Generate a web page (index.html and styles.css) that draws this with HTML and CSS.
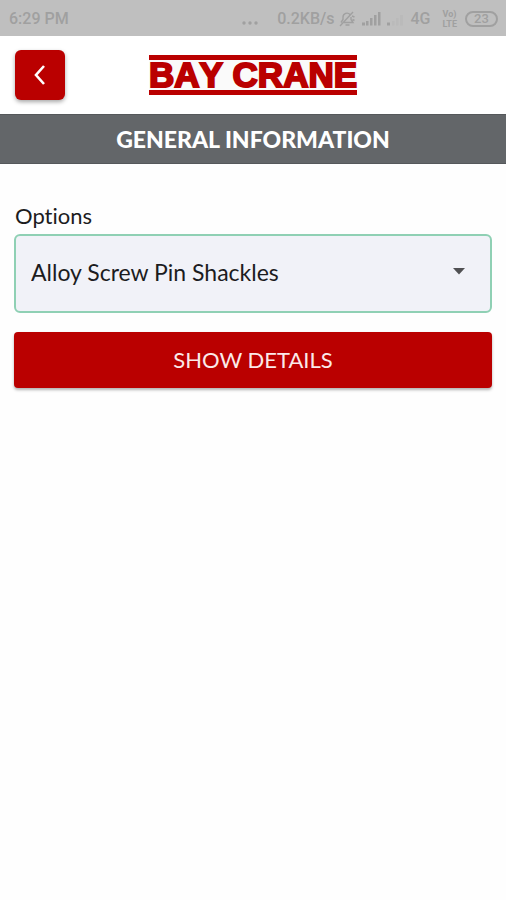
FILE: index.html
```html
<!DOCTYPE html>
<html lang="en">
<head>
<meta charset="utf-8">
<meta name="viewport" content="width=device-width, initial-scale=1">
<title>Bay Crane - General Information</title>
<link rel="stylesheet" href="styles.css">
</head>
<body>
<div class="status">
  <span class="time">6:29 PM</span>
  <span class="status-right">
    <svg class="dots" width="18" height="16" viewBox="0 0 18 16" fill="currentColor"><circle cx="3" cy="12" r="1.7"/><circle cx="9" cy="12" r="1.7"/><circle cx="15" cy="12" r="1.7"/></svg>
    <span>0.2KB/s</span>
    <svg width="18" height="16" viewBox="0 0 18 16" fill="none" stroke="currentColor" stroke-width="1.4"><path d="M3 11.500 5 8.500V6a4 4 0 0 1 7-2.500M13 6v2.500l2 3H6M7.500 14h4M2 15 15 1M14 5l2.500 1M14.500 8.500l2 1"/></svg>
    <svg class="signal" width="22" height="16" viewBox="0 0 22 16" fill="currentColor"><path d="M2 11.500h3v3H2zM6 10h2.500v4.500H6zM10 7h2.500v7.500H10zM14 4h2.500v10.500H14zM18 1h2.500v13.500H18z"/></svg>
    <svg class="signal" width="20" height="16" viewBox="0 0 20 16" fill="currentColor"><path d="M1 11.500h3v3H1z"/><path opacity=".15" d="M6 10h2.500v4.500H6zM10 7h2.500v7.500H10zM14 4h3v10.500h-3z"/></svg>
    <span>4G</span>
    <span class="volte"><span>Vo)</span><span>LTE</span></span>
    <span class="battery">23</span>
  </span>
</div>
<header class="header">
  <button class="back" type="button" aria-label="Back">
    <svg width="20" height="24" viewBox="0 0 20 24" fill="none" stroke="currentColor" stroke-width="2.600"><path d="M14 3 6 12l8 9"/></svg>
  </button>
  <div class="logo">BAY CRANE</div>
</header>
<h1 class="title">GENERAL INFORMATION</h1>
<main class="content">
  <label class="label" for="options">Options</label>
  <div class="field">
    <select id="options" class="select">
      <option>Alloy Screw Pin Shackles</option>
    </select>
    <svg class="caret" width="12" height="7" viewBox="0 0 12 7" fill="currentColor"><path d="M0 0h12L6 6.500z"/></svg>
  </div>
  <button class="submit" type="button">SHOW DETAILS</button>
</main>
</body>
</html>
```
FILE: styles.css
```css
* {
  box-sizing: border-box;
}

body {
  margin: 0;
  background: #fefefe;
  color: #1c1c1e;
  font-family: Lato, "Liberation Sans", sans-serif;
  font-variant-ligatures: none;
}

.status {
  display: flex;
  justify-content: space-between;
  align-items: center;
  height: 36px;
  padding: 2px 8px 0 9px;
  background: #bfbfbf;
  color: #a0a0a0;
  font: 500 16px/20px Roboto, sans-serif;
}

.status-right {
  display: flex;
  align-items: center;
  gap: 4px;
}

.dots {
  margin-right: 14px;
}

.volte {
  display: flex;
  flex-direction: column;
  margin: 0 4px 0 8px;
  font-size: 9px;
  font-weight: 700;
  line-height: 10px;
}

.battery {
  width: 33px;
  border: 2px solid;
  border-radius: 8px;
  font-size: 13px;
  line-height: 12px;
  text-align: center;
}

.header {
  display: grid;
  grid-template-columns: 50px 1fr 50px;
  align-items: center;
  padding: 14px 15px;
  background: #fff;
}

.back {
  display: grid;
  place-items: center;
  height: 50px;
  padding: 0;
  border: 0;
  border-radius: 6px;
  background: #ba0000;
  box-shadow: 0 2px 4px rgb(0 0 0 / 35%);
  color: #fff;
}

.logo {
  justify-self: center;
  border: solid #ba0000;
  border-width: 5px 0;
  background: #fafafa;
  color: #ba0000;
  font: 700 35px/30px "Liberation Sans", Arial, sans-serif;
  font-kerning: none;
  -webkit-text-stroke: 2px #ba0000;
}

.title {
  margin: 0;
  border: solid #55585b;
  border-width: 1px 0;
  background: #636669;
  color: #fff;
  font-size: 23px;
  font-weight: 900;
  line-height: 48px;
  text-align: center;
}

.content {
  display: flex;
  flex-direction: column;
  padding: 38px 14px;
}

.label {
  padding-left: 1px;
  font-size: 22px;
  line-height: 28px;
}

.field {
  position: relative;
  margin: 4px 0 19px;
}

.select {
  display: block;
  width: 100%;
  height: 79px;
  padding: 0 48px 4px 15px;
  appearance: none;
  border: 2px solid #8fd0b4;
  border-radius: 6px;
  background: #f1f2f8;
  color: inherit;
  font: inherit;
  font-size: 23px;
}

.caret {
  position: absolute;
  top: 34px;
  right: 27px;
  color: #505053;
  pointer-events: none;
}

.submit {
  height: 56px;
  padding: 0 0 2px;
  border: 0;
  border-radius: 4px;
  background: #ba0000;
  box-shadow: 0 2px 3px rgb(0 0 0 / 30%);
  color: #fbe9e9;
  font: inherit;
  font-size: 22px;
}
```
